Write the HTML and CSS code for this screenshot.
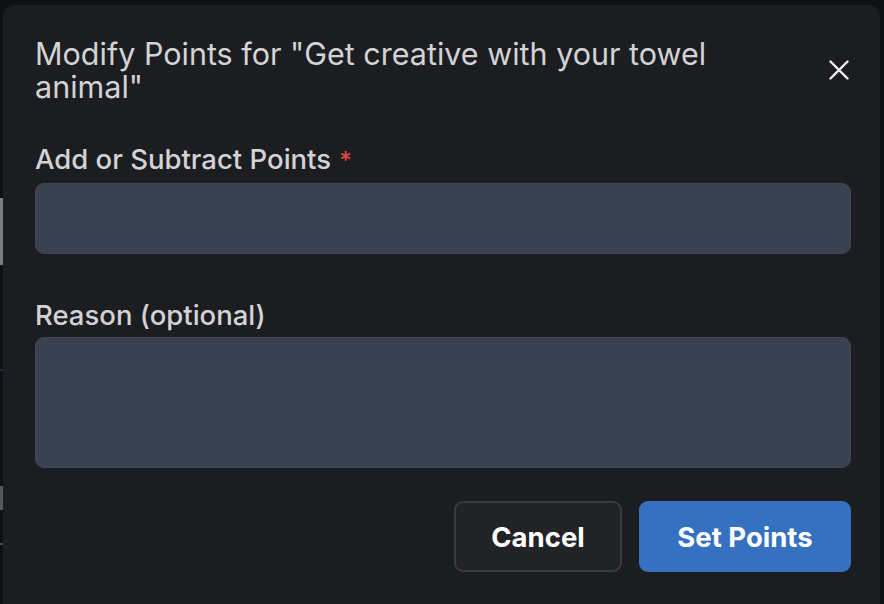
FILE: index.html
```html
<!DOCTYPE html>
<html lang="en">
<head>
    <meta charset="UTF-8">
    <meta name="viewport" content="width=device-width, initial-scale=1.0">
    <title>Modify Points</title>
    <link rel="stylesheet" href="styles.css">
</head>
<body>

<!-- Bits of the page under the overlay -->
<div class="backdrop-edge">
    <span class="edge-gap edge-gap-1"></span>
    <span class="edge-bar edge-bar-1"></span>
    <span class="edge-gap edge-gap-2"></span>
    <span class="edge-line edge-line-blue"></span>
    <span class="edge-gap edge-gap-3"></span>
    <span class="edge-bar edge-bar-2"></span>
    <span class="edge-gap edge-gap-4"></span>
    <span class="edge-line"></span>
</div>

<div class="modal">
    <header class="modal-header">
        <h2 class="modal-title">Modify Points for "Get creative with your towel animal"</h2>
        <button class="close-btn" aria-label="Close">
            <svg width="20" height="20" viewBox="0 0 20 20">
                <path d="M1.5 1.5 L18.5 18.5 M18.5 1.5 L1.5 18.5" stroke="#f2f2f2" stroke-width="2.4" stroke-linecap="round"/>
            </svg>
        </button>
    </header>

    <div class="modal-body">
        <div class="field">
            <label for="pointsInput">Add or Subtract Points <span class="required">*</span></label>
            <input type="text" id="pointsInput">
        </div>

        <div class="field">
            <label for="reasonInput">Reason (optional)</label>
            <textarea id="reasonInput"></textarea>
        </div>
    </div>

    <footer class="modal-footer">
        <button class="btn btn-cancel">Cancel</button>
        <button class="btn btn-primary">Set Points</button>
    </footer>
</div>

</body>
</html>
```

FILE: styles.css
```css
* {
    box-sizing: border-box;
}
body {
    margin: 0;
    height: 604px;
    overflow: hidden;
    background-color: #0f1014;
    font-family: Inter, "Liberation Sans", Arial, sans-serif;
    display: flex;
    align-items: flex-start;
}
.backdrop-edge {
    width: 3px;
    display: flex;
    flex-direction: column;
}
.edge-gap-1 { height: 198px; }
.edge-gap-2 { height: 104px; }
.edge-gap-3 { height: 115px; }
.edge-gap-4 { height: 33px; }
.edge-bar {
    display: block;
    background-color: #7b7c80;
}
.edge-bar-1 { height: 67px; }
.edge-bar-2 { height: 24px; background-color: #55575c; }
.edge-line {
    display: block;
    height: 2px;
    background-color: #4a4c52;
}
.edge-line-blue {
    background-color: #2c2c52;
}
.modal {
    margin-top: 5px;
    width: 877px;
    height: 620px;
    background-color: #1c1d20;
    border-radius: 12px 12px 0 0;
    padding: 0 29px 0 32px;
    color: #d3d3d5;
}
.modal-header {
    display: flex;
    justify-content: space-between;
    align-items: flex-start;
    padding-top: 32px;
}
.modal-title {
    margin: 0;
    max-width: 720px;
    font-size: 30.5px;
    font-weight: 400;
    line-height: 33px;
    color: #d3d3d5;
}
.close-btn {
    background: none;
    border: none;
    padding: 0;
    margin: 23px 2px 0 0;
    width: 20px;
    height: 20px;
    cursor: pointer;
}
.close-btn svg {
    display: block;
}
.modal-body {
    padding-top: 40px;
}
.field {
    display: flex;
    flex-direction: column;
}
.field + .field {
    margin-top: 45px;
}
label {
    font-size: 27.5px;
    font-weight: 500;
    line-height: 32px;
    margin-bottom: 6px;
    color: #d3d3d5;
}
.required {
    color: #e0473f;
    margin-left: 1px;
    font-size: 24px;
}
input[type="text"], textarea {
    width: 100%;
    background-color: #3a4150;
    border: 1px solid #3f4655;
    border-radius: 9px;
    color: #ffffff;
    font: inherit;
    font-size: 24px;
    padding: 0 20px;
    outline: none;
}
input[type="text"] {
    height: 71px;
}
textarea {
    height: 131px;
    resize: none;
    padding-top: 14px;
}
.modal-footer {
    display: flex;
    justify-content: flex-end;
    gap: 17px;
    margin-top: 33px;
}
.btn {
    height: 71px;
    border-radius: 9px;
    font-family: inherit;
    font-size: 27.5px;
    font-weight: 700;
    color: #ffffff;
    cursor: pointer;
}
.btn-cancel {
    width: 168px;
    background-color: #222326;
    border: 2px solid #3a3b3f;
}
.btn-primary {
    width: 212px;
    background-color: #3671c1;
    border: none;
}
```
